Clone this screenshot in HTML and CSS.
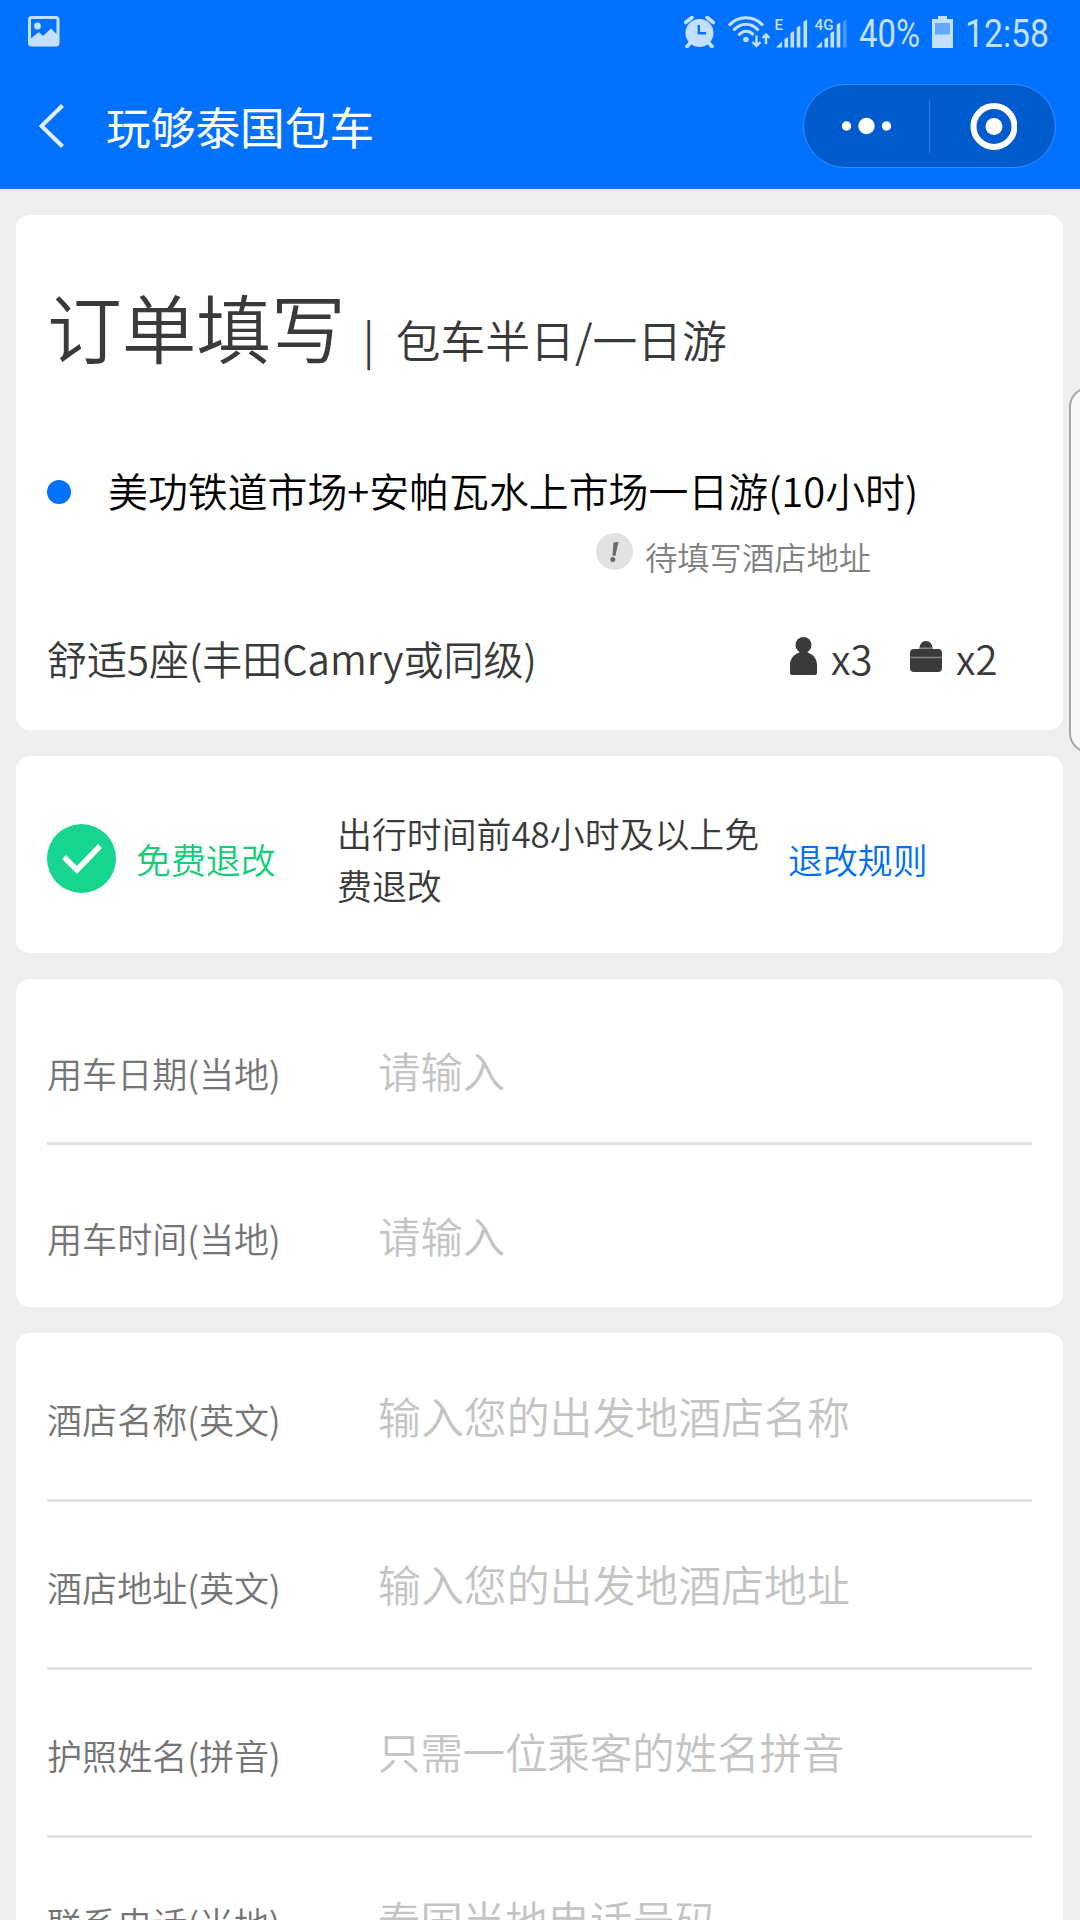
FILE: index.html
```html
<!DOCTYPE html>
<html lang="zh-CN">
<head>
    <meta charset="UTF-8">
    <meta name="viewport" content="width=device-width, initial-scale=1.0">
    <title>玩够泰国包车</title>
    <link rel="stylesheet" href="styles.css">
</head>
<body>
    <header class="header">
        <div class="status-bar">
            <svg class="icon-picture" width="32" height="31" viewBox="0 0 32 31">
                <rect x="1.5" y="1.5" width="28.5" height="27.5" rx="2" fill="none" stroke="currentColor" stroke-width="3"/>
                <circle cx="9.5" cy="10" r="3.4" fill="currentColor"/>
                <path d="M2 23l9-7 4 4 8-7.500 7 7V29H2z" fill="currentColor"/>
            </svg>
            <div class="status-right">
                <svg class="icon-alarm" width="31" height="32" viewBox="0 0 31 32">
                    <circle cx="15.500" cy="17" r="14" fill="currentColor"/>
                    <path d="M1.500 6.500L8 1.500M29.500 6.500L23 1.500M6 27l-3 3.500M25 27l3 3.500" stroke="currentColor" stroke-width="3.600" stroke-linecap="round"/>
                    <path d="M14.800 9v8.300H22" fill="none" stroke="#0072ff" stroke-width="2.400"/>
                </svg>
                <svg class="icon-wifi" width="43" height="32" viewBox="0 0 43 32">
                    <g fill="none" stroke="currentColor" stroke-width="3">
                        <path d="M1 9.500C10-1 26-1 35 9.500"/>
                        <path d="M5.500 14.500C12.500 6 23.500 6 30.500 14.500"/>
                        <path d="M10.500 19.500c4.500-5.500 10.500-5.500 15-.500"/>
                    </g>
                    <circle cx="18" cy="23.500" r="2.800" fill="currentColor"/>
                    <path d="M28.500 19.500v9.500M24.500 26l4 4 4-4M38 28V19M34.500 22l3.500-3.500 3.500 3.500" fill="none" stroke="currentColor" stroke-width="2.400"/>
                </svg>
                <svg class="icon-signal" width="33" height="32" viewBox="0 0 33 32">
                    <text x="-0.500" y="14" class="signal-text">E</text>
                    <path d="M1 31.500l6-6v6zM9.500 23l3.600-2v10.500H9.500zM15.500 17l3.600-2v16.500h-3.600zM21.700 11.500l3.600-2v22h-3.600zM28.500 5.500l3.600-2v28h-3.600z" fill="currentColor"/>
                </svg>
                <svg class="icon-signal icon-signal-4g" width="33" height="32" viewBox="0 0 33 32">
                    <text x="-0.500" y="14" class="signal-text" textLength="19" lengthAdjust="spacingAndGlyphs">4G</text>
                    <path d="M1 31.500l6-6v6zM9.500 23l3.600-2v10.500H9.500zM15.500 17l3.600-2v16.500h-3.600zM21.700 8.500l3.600-2v25h-3.600z" fill="currentColor"/>
                    <path d="M28 5.500l3.600-2v28H28z" fill="currentColor" opacity=".35"/>
                </svg>
                <svg class="status-text" width="61" height="46" viewBox="0 0 61 46">
                    <text x="0" y="38" textLength="61" lengthAdjust="spacingAndGlyphs">40%</text>
                </svg>
                <svg class="icon-battery" width="21" height="32" viewBox="0 0 21 32">
                    <path d="M6 0h9v3h6v29H0V3h6z" fill="currentColor"/>
                    <path d="M3 7h15v11.500H3z" fill="#0072ff" opacity=".5"/>
                </svg>
                <svg class="status-text status-time" width="84" height="46" viewBox="0 0 84 46">
                    <text x="0" y="38" textLength="84" lengthAdjust="spacingAndGlyphs">12:58</text>
                </svg>
            </div>
        </div>
        <div class="nav-bar">
            <svg class="icon-back" width="26" height="46" viewBox="0 0 26 46">
                <path d="M23.500 2.500L2.500 23l21 20.500" fill="none" stroke="#e4f0ff" stroke-width="4"/>
            </svg>
            <h1 class="nav-title">玩够泰国包车</h1>
            <div class="capsule">
                <div class="capsule-half">
                    <svg width="50" height="18" viewBox="0 0 50 18" fill="#fff">
                        <circle cx="4.500" cy="9" r="4.700"/>
                        <circle cx="24.500" cy="9" r="8.200"/>
                        <circle cx="44.500" cy="9" r="4.700"/>
                    </svg>
                </div>
                <div class="capsule-line"></div>
                <div class="capsule-half">
                    <svg width="48" height="48" viewBox="0 0 48 48">
                        <circle cx="25" cy="24.500" r="20.500" fill="none" stroke="#fff" stroke-width="6"/>
                        <circle cx="25" cy="24.500" r="8.500" fill="#fff"/>
                    </svg>
                </div>
            </div>
        </div>
    </header>

    <main class="content">
        <section class="card order-card">
            <div class="order-head">
                <h2 class="order-title">订单填写</h2>
                <span class="order-sep">|</span>
                <span class="order-type">包车半日/一日游</span>
            </div>
            <div class="route">
                <span class="route-dot"></span>
                <span class="route-name">美功铁道市场+安帕瓦水上市场一日游(10小时)</span>
            </div>
            <div class="route-tip">
                <svg width="37" height="37" viewBox="0 0 37 37">
                    <circle cx="18.500" cy="18.500" r="18.500" fill="#e2e2e2"/>
                    <path d="M17.500 9.500l5-.8-3 14h-3z" fill="#6b6b6b"/>
                    <circle cx="16.800" cy="26.500" r="2.500" fill="#6b6b6b"/>
                </svg>
                <span>待填写酒店地址</span>
            </div>
            <div class="car">
                <span class="car-name">舒适5座(丰田Camry或同级)</span>
                <svg class="icon-person" width="27" height="38" viewBox="0 0 27 38" fill="#3a3a3a">
                    <circle cx="13.500" cy="8" r="8"/>
                    <path d="M9.500 13h8v2.500c5.500 1.500 9.500 6.500 9.500 12.500v8q0 2-2 2H2q-2 0-2-2v-8c0-6 4-11 9.500-12.500z"/>
                </svg>
                <span class="car-num">x3</span>
                <svg class="icon-bag" width="32" height="31" viewBox="0 0 32 31">
                    <path d="M9.500 8C9.500 3 12 0 16 0s6.500 3 6.500 8zM4 8h24q4 0 4 4v15q0 4-4 4H4q-4 0-4-4V12q0-4 4-4z" fill="#3a3a3a"/>
                    <path d="M9.500 7.200h13M0 16.500h32" stroke="#858585" stroke-width="1.500"/>
                </svg>
                <span class="car-num">x2</span>
            </div>
        </section>

        <section class="card refund-card">
            <svg class="icon-check" width="69" height="69" viewBox="0 0 69 69">
                <circle cx="34.500" cy="34.500" r="34.500" fill="#15d58f"/>
                <path d="M17 33L30 46l23-24" fill="none" stroke="#fff" stroke-width="5.500"/>
            </svg>
            <span class="refund-name">免费退改</span>
            <p class="refund-desc">出行时间前48小时及以上免费退改</p>
            <a class="refund-rule">退改规则</a>
        </section>

        <section class="card date-card">
            <div class="form-row">
                <label>用车日期(当地)</label>
                <div class="placeholder">请输入</div>
            </div>
            <div class="form-row">
                <label>用车时间(当地)</label>
                <div class="placeholder">请输入</div>
            </div>
        </section>

        <section class="card info-card">
            <div class="form-row">
                <label>酒店名称(英文)</label>
                <div class="placeholder placeholder-hotel">输入您的出发地酒店名称</div>
            </div>
            <div class="form-row">
                <label>酒店地址(英文)</label>
                <div class="placeholder placeholder-hotel">输入您的出发地酒店地址</div>
            </div>
            <div class="form-row">
                <label>护照姓名(拼音)</label>
                <div class="placeholder">只需一位乘客的姓名拼音</div>
            </div>
            <div class="form-row">
                <label>联系电话(当地)</label>
                <div class="placeholder">泰国当地电话号码</div>
            </div>
        </section>
    </main>

    <div class="edge-handle"></div>
</body>
</html>
```
FILE: styles.css
```css
* {
    box-sizing: border-box;
}
body {
    margin: 0;
    position: relative;
    height: 1920px;
    overflow: hidden;
    background: #eeeeee;
    color: #3a3a3a;
    font-family: "Noto Sans CJK SC", sans-serif;
    font-weight: 350;
    white-space: nowrap;
}
h1, h2, p {
    margin: 0;
    font-weight: inherit;
}
svg {
    display: block;
    flex: none;
}

/* header */
.header {
    height: 189px;
    background: #0072ff;
    color: #fff;
}
.status-bar {
    height: 63px;
    padding: 0 26px 0 28px;
    display: flex;
    justify-content: space-between;
    align-items: center;
    color: #c5dfff;
}
.status-right {
    display: flex;
    align-items: center;
    width: 369px;
}
.icon-alarm {
    margin-left: -1px;
}
.icon-wifi {
    margin-left: 13px;
}
.icon-signal {
    margin-left: 4px;
}
.icon-signal-4g {
    margin-left: 7px;
}
.signal-text {
    font-family: Roboto, sans-serif;
    font-size: 15px;
    font-weight: 500;
    fill: currentColor;
}
.status-text {
    margin-left: 11px;
    overflow: visible;
    font-family: Roboto, sans-serif;
    font-size: 39px;
    font-weight: 400;
    fill: currentColor;
}
.icon-battery {
    margin-left: 12px;
}
.status-time {
    margin-left: 12px;
}
.nav-bar {
    height: 126px;
    padding: 0 24px 0 39px;
    display: flex;
    align-items: center;
}
.nav-title {
    margin-left: 41px;
    padding-bottom: 1px;
    font-size: 44.7px;
    line-height: 60px;
    font-weight: 400;
}
.capsule {
    margin-left: auto;
    width: 253px;
    height: 84px;
    border: 1px solid #338eff;
    border-radius: 42px;
    background: #005bcc;
    display: flex;
    align-items: center;
}
.capsule-half {
    flex: 1;
    display: flex;
    justify-content: center;
}
.capsule-line {
    width: 1px;
    height: 53px;
    background: #2f7ddb;
}

/* cards */
.content {
    padding: 26px 17px 0 16px;
}
.card {
    padding: 0 31px;
    margin-bottom: 26px;
    background: #fff;
    border-radius: 14px;
}
.order-card {
    height: 515px;
    padding-top: 66px;
}
.order-head {
    height: 90px;
    display: flex;
    align-items: baseline;
}
.order-title {
    font-size: 74.7px;
    line-height: 90px;
}
.order-sep {
    margin-left: 17px;
    font-size: 45px;
    line-height: 60px;
}
.order-type {
    margin-left: 21px;
    font-size: 44.8px;
    line-height: 60px;
}
.route {
    margin-top: 90px;
    height: 56px;
    display: flex;
    align-items: center;
    color: #000;
    font-size: 39.9px;
}
.route-dot {
    width: 24px;
    height: 24px;
    margin-top: 6px;
    border-radius: 50%;
    background: #0072ff;
}
.route-name {
    margin-left: 37px;
}
.route-tip {
    margin: 16px 0 0 549px;
    height: 50px;
    display: flex;
    align-items: flex-start;
    color: #808080;
    font-size: 32.3px;
    line-height: 46px;
}
.route-tip span {
    margin-left: 12px;
}
.car {
    margin-top: 45px;
    height: 56px;
    display: flex;
    align-items: center;
    font-size: 40px;
}
.car-name {
    width: 743px;
    padding-top: 4px;
}
.car-num {
    width: 42px;
    margin-left: 14px;
    padding-top: 4px;
}
.icon-bag {
    margin-left: 37px;
}
.refund-card {
    height: 197px;
    display: flex;
    align-items: center;
    font-size: 34.9px;
    line-height: 52px;
}
.icon-check {
    margin-top: 8px;
}
.refund-name {
    width: 140px;
    margin: 9px 0 0 20px;
    color: #13ce76;
}
.refund-desc {
    width: 426px;
    margin: 9px 0 0 61px;
    white-space: normal;
}
.refund-rule {
    margin: 9px 0 0 25px;
    color: #0070f0;
}

/* form */
.form-row {
    display: flex;
    align-items: center;
    border-bottom: 3px solid #e3e3e3;
}
.form-row:last-child {
    border-bottom: none;
}
.form-row label {
    width: 331px;
    color: #757575;
    font-size: 35.1px;
    line-height: 52px;
}
.placeholder {
    margin-bottom: 7px;
    color: #c4c4c4;
    font-size: 42.4px;
    line-height: 60px;
}
.placeholder-hotel {
    font-size: 42.9px;
}
.date-card {
    height: 328px;
}
.date-card .form-row {
    height: 166px;
    padding-top: 25px;
}
.date-card .form-row:last-child {
    height: 162px;
    padding-top: 24px;
}
.info-card {
    height: 587px;
    margin-bottom: 0;
    border-radius: 14px 14px 0 0;
    overflow: hidden;
}
.info-card .form-row {
    height: 168px;
    padding-top: 5px;
}
.info-card .form-row:first-child {
    height: 169px;
}
.info-card .form-row:last-child {
    padding-top: 2px;
}
.info-card .placeholder {
    margin-bottom: 8px;
}

/* side panel handle at the screen edge */
.edge-handle {
    position: absolute;
    top: 387px;
    right: -30px;
    width: 41px;
    height: 366px;
    border: 2px solid #a8a8a8;
    border-radius: 20px;
    background: #f8f8f8;
}
```
